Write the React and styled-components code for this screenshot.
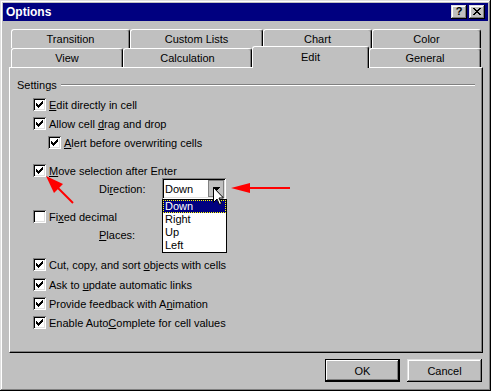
import React from 'react';
import styled, { createGlobalStyle } from 'styled-components';

const GlobalStyle = createGlobalStyle`
  html, body { margin: 0; padding: 0; background: #c0c0c0; }
  body {
    font-family: "Liberation Sans", Arial, sans-serif;
    font-size: 11px;
    color: #000;
  }
  * { box-sizing: border-box; }
`;

const raised = 'inset -1px -1px #000, inset 1px 1px #dfdfdf, inset -2px -2px #808080, inset 2px 2px #fff';
const sunken = 'inset 1px 1px #808080, inset -1px -1px #fff, inset 2px 2px #000, inset -2px -2px #dfdfdf';

const Window = styled.div`
    position: relative;
    width: 491px;
    height: 391px;
    padding: 3px;
    background: #c0c0c0;
    box-shadow: ${raised};
    display: flex;
    flex-direction: column;
`
const TitleBar = styled.div`
    height: 18px;
    background: #000080;
    display: flex;
    align-items: center;
    justify-content: space-between;
    padding: 0 3px 0 3px;
`
const Title = styled.span`
    color: #fff;
    font-weight: 700;
    font-size: 12px;
`
const TitleButtons = styled.div`
    display: flex;
    gap: 2px;
`
const TitleButton = styled.div`
    width: 16px;
    height: 14px;
    background: #c0c0c0;
    box-shadow: ${raised};
    display: flex;
    align-items: center;
    justify-content: center;
    font-weight: 700;
    font-size: 11px;
    line-height: 1;
    padding-bottom: 1px;
`
const Body = styled.div`
    flex: 1;
    display: flex;
    flex-direction: column;
    padding: 8px 5px 0 6px;
`
const Tabs = styled.div`
    display: flex;
    flex-direction: column;
    margin-left: 2px;
`
const TabRow = styled.div`
    display: flex;
    height: 19px;
`
const Tab = styled.div`
    position: relative;
    z-index: ${p => (p.$active ? 2 : 0)};
    width: ${p => p.$w}px;
    height: ${p => (p.$active ? 22 : 19)}px;
    margin-top: ${p => (p.$active ? -2 : 0)}px;
    background: #c0c0c0;
    border-top: 1px solid #fff;
    border-left: 1px solid #fff;
    border-right: 1px solid #000;
    border-radius: 3px 3px 0 0;
    box-shadow: inset -1px 0 #808080;
    display: flex;
    justify-content: center;
    padding-top: ${p => (p.$active ? 4 : 3)}px;
`
const Panel = styled.div`
    position: relative;
    z-index: 1;
    width: 474px;
    height: 286px;
    border-top: 1px solid #fff;
    border-left: 1px solid #fff;
    border-right: 1px solid #000;
    border-bottom: 1px solid #000;
    box-shadow: inset -1px -1px #808080;
    padding-top: 10px;
    display: flex;
    flex-direction: column;
`
const GroupHeader = styled.div`
    display: flex;
    align-items: center;
    height: 13px;
    padding: 0 7px;
`
const Etch = styled.div`
    flex: 1;
    margin-left: 4px;
    margin-top: 1px;
    height: 2px;
    border-top: 1px solid #808080;
    border-bottom: 1px solid #fff;
`
const Row = styled.div`
    display: flex;
    align-items: center;
    gap: 3px;
    height: ${p => p.$h || 13}px;
    margin-top: ${p => p.$mt}px;
    padding-left: ${p => p.$indent}px;
`
const Box = styled.div`
    width: 13px;
    height: 13px;
    flex: none;
    background: #fff;
    box-shadow: ${sunken};
    position: relative;
`
const U = styled.span`
    text-decoration: underline;
    text-underline-offset: 1px;
`
const FieldLabel = styled.span`
    width: 60px;
    flex: none;
`
const Combo = styled.div`
    position: relative;
    width: 64px;
    height: 21px;
    background: #fff;
    box-shadow: ${sunken};
    display: flex;
    align-items: center;
    padding: 0 2px 0 3px;
`
const ComboText = styled.span`
    flex: 1;
`
const DropButton = styled.div`
    width: 16px;
    height: 17px;
    background: #c0c0c0;
    border: 1px solid #808080;
    display: flex;
    align-items: center;
    justify-content: center;
    padding: 1px 0 0 1px;
`
const DropList = styled.div`
    position: absolute;
    z-index: 3;
    top: 100%;
    left: 0;
    width: 65px;
    background: #fff;
    border: 1px solid #000;
    display: flex;
    flex-direction: column;
`
const DropItem = styled.div`
    height: 13px;
    line-height: 13px;
    padding-left: 2px;
    background: ${p => (p.$selected ? '#000080' : '#fff')};
    color: ${p => (p.$selected ? '#fff' : '#000')};
    outline: ${p => (p.$selected ? '1px dotted #ffff00' : 'none')};
    outline-offset: -1px;
`
const Footer = styled.div`
    display: flex;
    justify-content: flex-end;
    gap: 7px;
    margin-top: 6px;
    padding-right: 1px;
`
const Button = styled.div`
    width: 75px;
    height: 23px;
    background: #c0c0c0;
    display: flex;
    align-items: center;
    justify-content: center;
    box-shadow: ${p => (p.$default
        ? 'inset 0 0 0 1px #000, inset -2px -2px #000, inset 2px 2px #fff, inset -3px -3px #808080'
        : raised)};
`
const Overlay = styled.svg`
    position: absolute;
    left: 0;
    top: 0;
    z-index: 5;
    pointer-events: none;
`

const checkTops = [5, 6, 7, 6, 5, 4, 3];

const Check = () => (
    <svg width="13" height="13" style={{ position: 'absolute', left: 0, top: 0 }} shapeRendering="crispEdges">
        {checkTops.map((t, i) => <rect key={i} x={3 + i} y={t} width="1" height="3" fill="#000" />)}
    </svg>
)

const Checkbox = ({ checked }) => <Box>{checked && <Check />}</Box>

const CheckRow = ({ mt, indent = 23, checked = true, children }) => (
    <Row $mt={mt} $indent={indent}>
        <Checkbox checked={checked} />
        <span>{children}</span>
    </Row>
)

const upperTabs = [['Transition', 119], ['Custom Lists', 133], ['Chart', 109], ['Color', 109]];
const lowerTabs = [['View', 112], ['Calculation', 129], ['Edit', 117], ['General', 112]];

export default function App() {
    return (
        <>
            <GlobalStyle />
            <Window>
                <TitleBar>
                    <Title>Options</Title>
                    <TitleButtons>
                        <TitleButton>?</TitleButton>
                        <TitleButton>
                            <svg width="8" height="7" shapeRendering="crispEdges">
                                <path d="M0 0h2v1h-2zM6 0h2v1h-2zM1 1h2v1h-2zM5 1h2v1h-2zM2 2h4v1h-4zM3 3h2v1h-2zM2 4h4v1h-4zM1 5h2v1h-2zM5 5h2v1h-2zM0 6h2v1h-2zM6 6h2v1h-2z" fill="#000" />
                            </svg>
                        </TitleButton>
                    </TitleButtons>
                </TitleBar>

                <Body>
                    <Tabs>
                        <TabRow>
                            {upperTabs.map(([name, w]) => <Tab key={name} $w={w}>{name}</Tab>)}
                        </TabRow>
                        <TabRow>
                            {lowerTabs.map(([name, w]) => <Tab key={name} $w={w} $active={name === 'Edit'}>{name}</Tab>)}
                        </TabRow>
                    </Tabs>

                    <Panel>
                        <GroupHeader>
                            <span>Settings</span>
                            <Etch />
                        </GroupHeader>
                        <CheckRow mt={7}><U>E</U>dit directly in cell</CheckRow>
                        <CheckRow mt={6}>Allow cell <U>d</U>rag and drop</CheckRow>
                        <CheckRow mt={6} indent={38}><U>A</U>lert before overwriting cells</CheckRow>
                        <CheckRow mt={15}><U>M</U>ove selection after Enter</CheckRow>
                        <Row $mt={1} $indent={89} $h={21}>
                            <FieldLabel>Di<U>r</U>ection:</FieldLabel>
                            <Combo>
                                <ComboText>Down</ComboText>
                                <DropButton>
                                    <svg width="7" height="4" shapeRendering="crispEdges">
                                        <path d="M0 0h7v1h-7zM1 1h5v1h-5zM2 2h3v1h-3zM3 3h1v1h-1z" fill="#000" />
                                    </svg>
                                </DropButton>
                                <DropList>
                                    <DropItem $selected>Down</DropItem>
                                    <DropItem>Right</DropItem>
                                    <DropItem>Up</DropItem>
                                    <DropItem>Left</DropItem>
                                </DropList>
                            </Combo>
                        </Row>
                        <CheckRow mt={11} checked={false}>Fi<U>x</U>ed decimal</CheckRow>
                        <Row $mt={5} $indent={89}>
                            <FieldLabel><U>P</U>laces:</FieldLabel>
                        </Row>
                        <CheckRow mt={17}>Cut, copy, and sort <U>o</U>bjects with cells</CheckRow>
                        <CheckRow mt={7}>Ask to <U>u</U>pdate automatic links</CheckRow>
                        <CheckRow mt={6}>Provide feedback with A<U>n</U>imation</CheckRow>
                        <CheckRow mt={6}>Enable Auto<U>C</U>omplete for cell values</CheckRow>
                    </Panel>

                    <Footer>
                        <Button $default>OK</Button>
                        <Button>Cancel</Button>
                    </Footer>
                </Body>

                <Overlay width="491" height="391">
                    <line x1="56" y1="186" x2="73" y2="203" stroke="#f00" strokeWidth="2" />
                    <polygon points="46,176 63,184 54,193" fill="#f00" />
                    <line x1="246" y1="188" x2="290" y2="188" stroke="#f00" strokeWidth="2" />
                    <polygon points="231,188 250,183 250,193" fill="#f00" />
                    <polygon points="213.5,187.5 213.5,202.5 217,199 219.5,204.5 221.5,203.5 219,198 223.5,198" fill="#fff" stroke="#000" strokeWidth="1" />
                </Overlay>
            </Window>
        </>
    )
}
